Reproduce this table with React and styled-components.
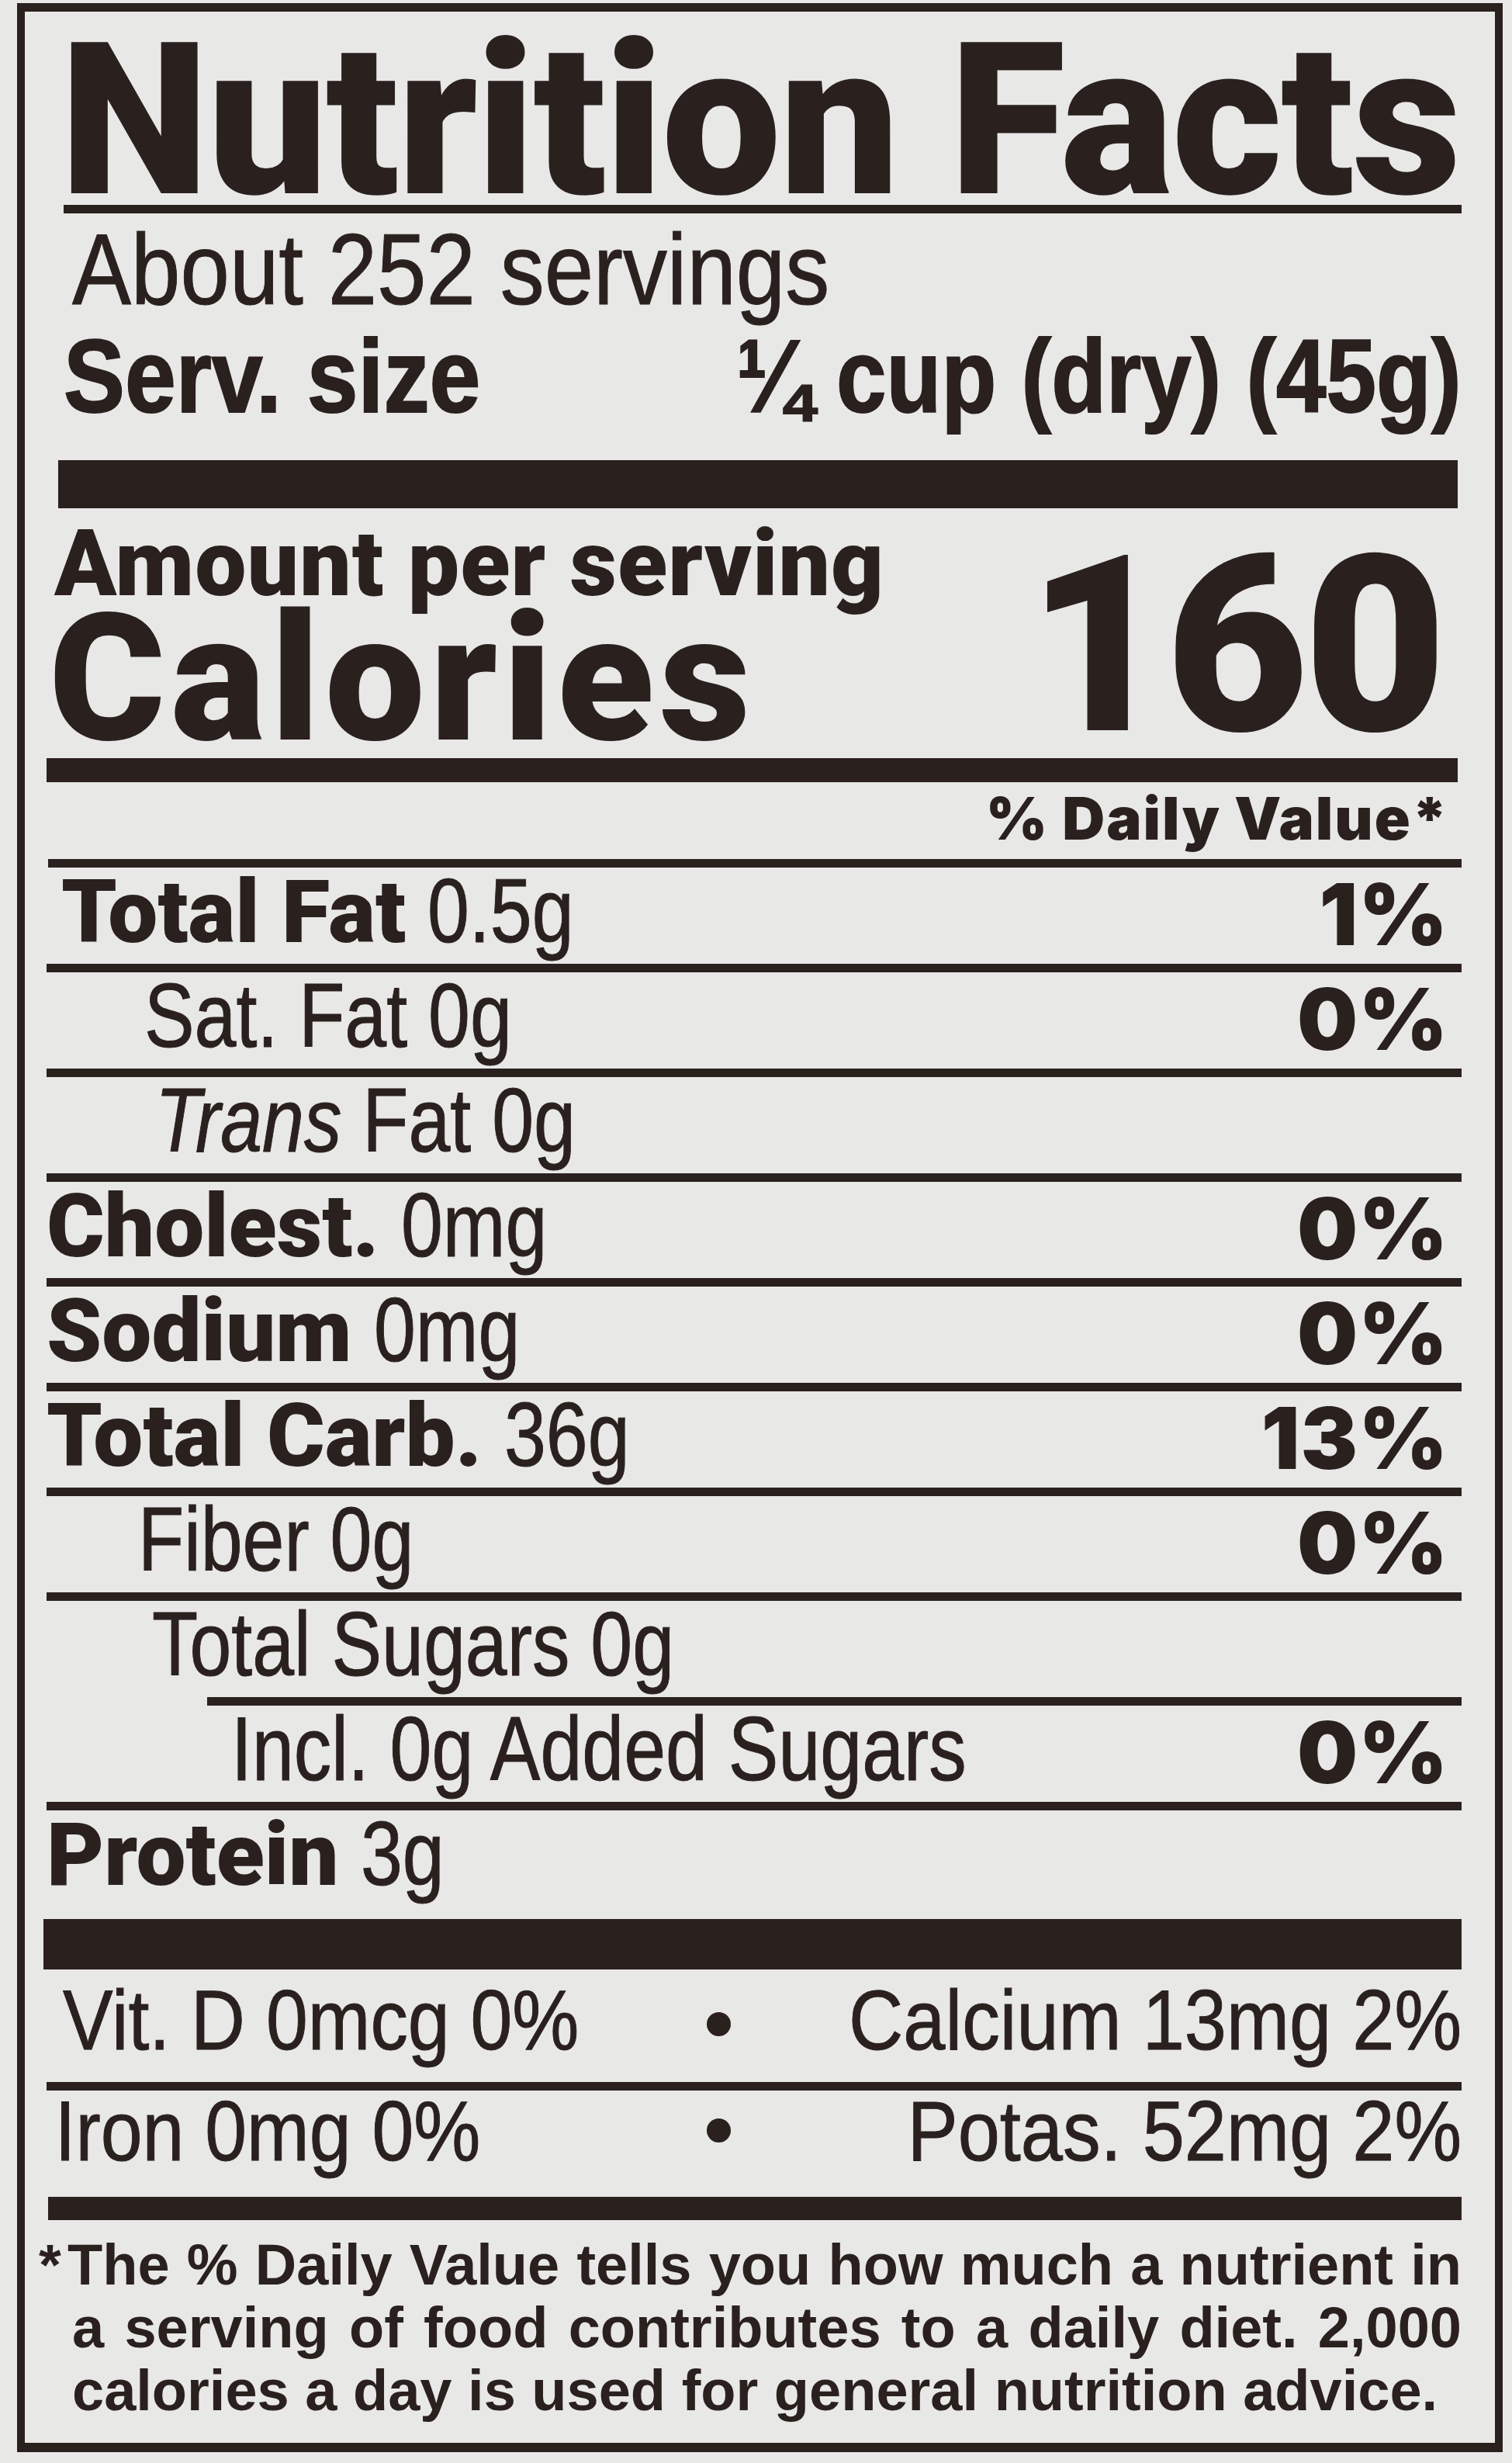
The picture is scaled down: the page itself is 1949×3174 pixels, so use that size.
import React from "react";
import styled, { createGlobalStyle } from "styled-components";

const INK = "#2a211f";
const PAPER = "#e8e8e6";

const Global = createGlobalStyle`
  html, body { margin: 0; padding: 0; background: ${PAPER}; }
  body { width: 1949px; height: 3174px; overflow: hidden; }
`;

const Page = styled.main`
  width: 1949px;
  height: 3174px;
  box-sizing: border-box;
  padding: 4px 12px 0 22px;
  background: ${PAPER};
`;

const Label = styled.section`
  width: 1915px;
  height: 3156px;
  box-sizing: border-box;
  border: solid ${INK};
  border-width: 11px 10px 12px 10px;
  padding: 0 43px 0 28px;
  display: flex;
  flex-direction: column;
  color: ${INK};
  overflow: hidden;
`;

const Title = styled.h1`
  margin: 0;
  height: 249px;
  flex: none;
  box-sizing: border-box;
  padding: 33px 0 0 17px;
  font-family: Roboto, sans-serif;
  font-weight: 900;
  font-size: 274px;
  line-height: 215px;
  letter-spacing: -2px;
  white-space: nowrap;
`;

const Rule = styled.div`
  flex: none;
  height: ${(p) => p.$h || 11}px;
  margin-left: ${(p) => p.$ml || 0}px;
  margin-right: ${(p) => p.$mr || 0}px;
  background: ${INK};
`;

/* Condensed Helvetica look: Liberation Sans squeezed horizontally */
const Servings = styled.div`
  flex: none;
  height: 139px;
  box-sizing: border-box;
  padding: 8px 0 0 33px;
  font-family: "Liberation Sans", Arial, sans-serif;
  font-weight: 400;
  font-size: 129px;
  line-height: 1;
  white-space: nowrap;
  -webkit-text-stroke: 1px ${INK};
  transform: scaleX(0.884);
  transform-origin: 33px 50%;
`;

const ServSize = styled.div`
  flex: none;
  height: 179px;
  box-sizing: border-box;
  padding: 0 0 0 22px;
  display: flex;
  justify-content: space-between;
  align-items: flex-start;
  font-family: "Liberation Sans", Arial, sans-serif;
  font-weight: 700;
  font-size: 133px;
  line-height: 1;
  white-space: nowrap;
  -webkit-text-stroke: 2px ${INK};
`;

const ServPart = styled.span`
  padding-top: 5px;
  transform: scaleX(${(p) => p.$sx});
  transform-origin: ${(p) => (p.$right ? "right" : "left")} center;
`;

const CalSection = styled.div`
  flex: none;
  height: 322px;
  display: flex;
  justify-content: space-between;
  align-items: flex-start;
  font-family: Roboto, sans-serif;
  font-weight: 900;
  white-space: nowrap;
`;

const CalLeft = styled.div`
  display: flex;
  flex-direction: column;
`;

const Amount = styled.div`
  padding: 22px 0 0 10px;
  font-size: 118px;
  line-height: 100px;
  letter-spacing: 1px;
`;

const Calories = styled.div`
  margin-top: 3px;
  padding-left: 3px;
  font-size: 229px;
  line-height: 190px;
  letter-spacing: 7px;
`;

const CalValue = styled.div`
  padding: 58px 25px 0 0;
  font-size: 318px;
  line-height: 240px;
  letter-spacing: -6px;
`;

const DVHead = styled.div`
  flex: none;
  height: 99px;
  box-sizing: border-box;
  padding: 8px 16px 0 0;
  text-align: right;
  font-family: Inter, Roboto, sans-serif;
  font-weight: 900;
  font-size: 76px;
  line-height: 1;
  letter-spacing: 2px;
  white-space: nowrap;
`;

const NRow = styled.div`
  flex: none;
  height: ${(p) => p.$h}px;
  box-sizing: border-box;
  padding: 0 17px 0 ${(p) => p.$indent}px;
  display: flex;
  justify-content: space-between;
  align-items: flex-start;
  font-family: Roboto, sans-serif;
  font-weight: 900;
  font-size: 114px;
  line-height: 114px;
  white-space: nowrap;
`;

const Name = styled.div``;

const Amt = styled.span`
  display: inline-block;
  font-family: "Liberation Sans", Arial, sans-serif;
  font-weight: 400;
  font-size: 116px;
  line-height: 0;
  -webkit-text-stroke: 1px ${INK};
  transform: scaleX(0.835);
  transform-origin: left center;
`;

const Ital = styled.i`
  font-style: italic;
`;

const Pct = styled.div`
  padding-top: 6px;
  font-family: Inter, Roboto, sans-serif;
  font-size: 110px;
  line-height: 108px;
  letter-spacing: 1px;
`;

const VRow = styled.div`
  flex: none;
  height: ${(p) => p.$h}px;
  box-sizing: border-box;
  padding-top: ${(p) => p.$pt}px;
  display: grid;
  grid-template-columns: 846px 40px 1fr;
  font-family: "Liberation Sans", Arial, sans-serif;
  font-weight: 400;
  font-size: 110px;
  line-height: 104px;
  white-space: nowrap;
  -webkit-text-stroke: 1px ${INK};
`;

const VLeft = styled.div`
  padding-left: ${(p) => p.$indent}px;
  transform: scaleX(0.88);
  transform-origin: left center;
`;

const VMid = styled.div`
  text-align: center;
`;

const Dot = styled.span`
  display: inline-block;
  width: 31px;
  height: 31px;
  border-radius: 50%;
  background: ${INK};
  vertical-align: ${(p) => p.$lift}px;
`;

const VRight = styled.div`
  text-align: right;
  transform: scaleX(0.885);
  transform-origin: right center;
`;

const Footnote = styled.div`
  padding: 17px 0 0 33px;
  font-family: "Liberation Sans", Arial, sans-serif;
  font-weight: 700;
  font-size: 74px;
  line-height: 81px;
`;

const FootLine = styled.div`
  margin-left: ${(p) => (p.$hang ? -43 : 0)}px;
  text-align: ${(p) => (p.$justify ? "justify" : "left")};
  text-align-last: ${(p) => (p.$justify ? "justify" : "auto")};
`;

const Star = styled.span`
  display: inline-block;
  width: 37px;
`;

const rows = [
  { bold: "Total Fat", val: "0.5g", pct: "1%", indent: 19 },
  { val: "Sat. Fat 0g", pct: "0%", indent: 126 },
  { val: (<><Ital>Trans</Ital> Fat 0g</>), indent: 140 },
  { bold: "Cholest.", val: "0mg", pct: "0%", indent: 0 },
  { bold: "Sodium", val: "0mg", pct: "0%", indent: 0 },
  { bold: "Total Carb.", val: "36g", pct: "13%", indent: 0 },
  { val: "Fiber 0g", pct: "0%", indent: 118 },
  { val: "Total Sugars 0g", indent: 136, ruleIndent: 207 },
  { val: "Incl. 0g Added Sugars", pct: "0%", indent: 238 },
  { bold: "Protein", val: "3g", indent: 0, h: 140, last: true },
];

export default function App() {
  return (
    <>
      <Global />
      <Page>
        <Label>
          <Title>Nutrition Facts</Title>
          <Rule $ml={22} />
          <Servings>About 252 servings</Servings>
          <ServSize>
            <ServPart $sx={0.89}>Serv. size</ServPart>
            <ServPart $sx={0.872} $right>¼ cup (dry) (45g)</ServPart>
          </ServSize>
          <Rule $h={62} $ml={15} $mr={5} />
          <CalSection>
            <CalLeft>
              <Amount>Amount per serving</Amount>
              <Calories>Calories</Calories>
            </CalLeft>
            <CalValue>160</CalValue>
          </CalSection>
          <Rule $h={31} $mr={5} />
          <DVHead>% Daily Value*</DVHead>
          <Rule $ml={2} />
          {rows.map((r, i) => (
            <React.Fragment key={i}>
              <NRow $indent={r.indent} $h={r.h || 124}>
                <Name>
                  {r.bold}
                  {r.bold && " "}
                  {r.val && <Amt>{r.val}</Amt>}
                </Name>
                {r.pct && <Pct>{r.pct}</Pct>}
              </NRow>
              {!r.last && <Rule $ml={r.ruleIndent || 0} />}
            </React.Fragment>
          ))}
          <Rule $h={65} $ml={-4} />
          <VRow $h={145} $pt={13}>
            <VLeft $indent={24}>Vit. D 0mcg 0%</VLeft>
            <VMid><Dot $lift={17} /></VMid>
            <VRight>Calcium 13mg 2%</VRight>
          </VRow>
          <Rule $h={11} />
          <VRow $h={137} $pt={0}>
            <VLeft $indent={12}>Iron 0mg 0%</VLeft>
            <VMid><Dot $lift={23} /></VMid>
            <VRight>Potas. 52mg 2%</VRight>
          </VRow>
          <Rule $h={30} $ml={2} />
          <Footnote>
            <FootLine $hang $justify>
              <Star>*</Star>The % Daily Value tells you how much a nutrient in
            </FootLine>
            <FootLine $justify>
              a serving of food contributes to a daily diet. 2,000
            </FootLine>
            <FootLine>calories a day is used for general nutrition advice.</FootLine>
          </Footnote>
        </Label>
      </Page>
    </>
  );
}
